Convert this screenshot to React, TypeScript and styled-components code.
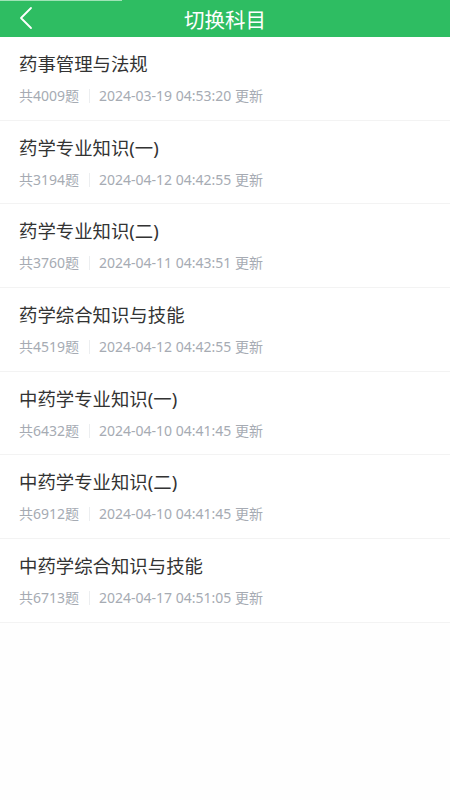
import React from "react";
import styled, { createGlobalStyle } from "styled-components";

const GlobalStyle = createGlobalStyle`
  html, body {
    margin: 0;
    padding: 0;
    background: #fefefe;
    font-family: "Noto Sans", "Noto Sans CJK SC", sans-serif;
  }
`;

const Page = styled.div`
  width: 450px;
  min-height: 800px;
  background: #fefefe;
`;

const Header = styled.header`
  position: relative;
  height: 37px;
  background: #2ebd62;
  display: flex;
  align-items: center;
  justify-content: center;
  color: #fff;
  font-size: 20.5px;
`;

const Progress = styled.div`
  position: absolute;
  left: 0;
  top: 0;
  width: 122px;
  height: 1px;
  background: #9fe3b6;
`;

const BackButton = styled.button`
  position: absolute;
  left: 14px;
  top: 5px;
  width: 24px;
  height: 26px;
  padding: 0;
  border: none;
  background: transparent;
  display: flex;
  align-items: center;
  justify-content: center;
`;

const List = styled.ul`
  margin: 0;
  padding: 0;
  list-style: none;
  background: #fff;
`;

const Item = styled.li`
  height: 83.7px;
  box-sizing: border-box;
  padding: 14px 19px 0;
  border-bottom: 1px solid #f3f3f3;
`;

const Title = styled.div`
  font-size: 18.4px;
  line-height: 26px;
  color: #333;
`;

const Meta = styled.div`
  margin-top: 10px;
  display: flex;
  align-items: center;
  font-size: 14px;
  line-height: 18px;
  color: #a6abb3;
`;

const Sep = styled.span`
  width: 1px;
  height: 14px;
  margin: 0 9px 0 10px;
  background: #eceef0;
`;

const subjects = [
  { name: "药事管理与法规", count: 4009, time: "2024-03-19 04:53:20" },
  { name: "药学专业知识(一)", count: 3194, time: "2024-04-12 04:42:55" },
  { name: "药学专业知识(二)", count: 3760, time: "2024-04-11 04:43:51" },
  { name: "药学综合知识与技能", count: 4519, time: "2024-04-12 04:42:55" },
  { name: "中药学专业知识(一)", count: 6432, time: "2024-04-10 04:41:45" },
  { name: "中药学专业知识(二)", count: 6912, time: "2024-04-10 04:41:45" },
  { name: "中药学综合知识与技能", count: 6713, time: "2024-04-17 04:51:05" },
];

const App: React.FC = () => {
  return (
    <Page>
      <GlobalStyle />
      <Header>
        <Progress />
        <BackButton aria-label="返回">
          <svg width="14" height="24" viewBox="0 0 14 24" fill="none">
            <path
              d="M12 2 L2 12 L12 22"
              stroke="#fff"
              strokeWidth="1.8"
              strokeLinecap="round"
              strokeLinejoin="round"
            />
          </svg>
        </BackButton>
        切换科目
      </Header>
      <List>
        {subjects.map((s) => (
          <Item key={s.name}>
            <Title>{s.name}</Title>
            <Meta>
              <span>共{s.count}题</span>
              <Sep />
              <span>{s.time} 更新</span>
            </Meta>
          </Item>
        ))}
      </List>
    </Page>
  );
};

export default App;
